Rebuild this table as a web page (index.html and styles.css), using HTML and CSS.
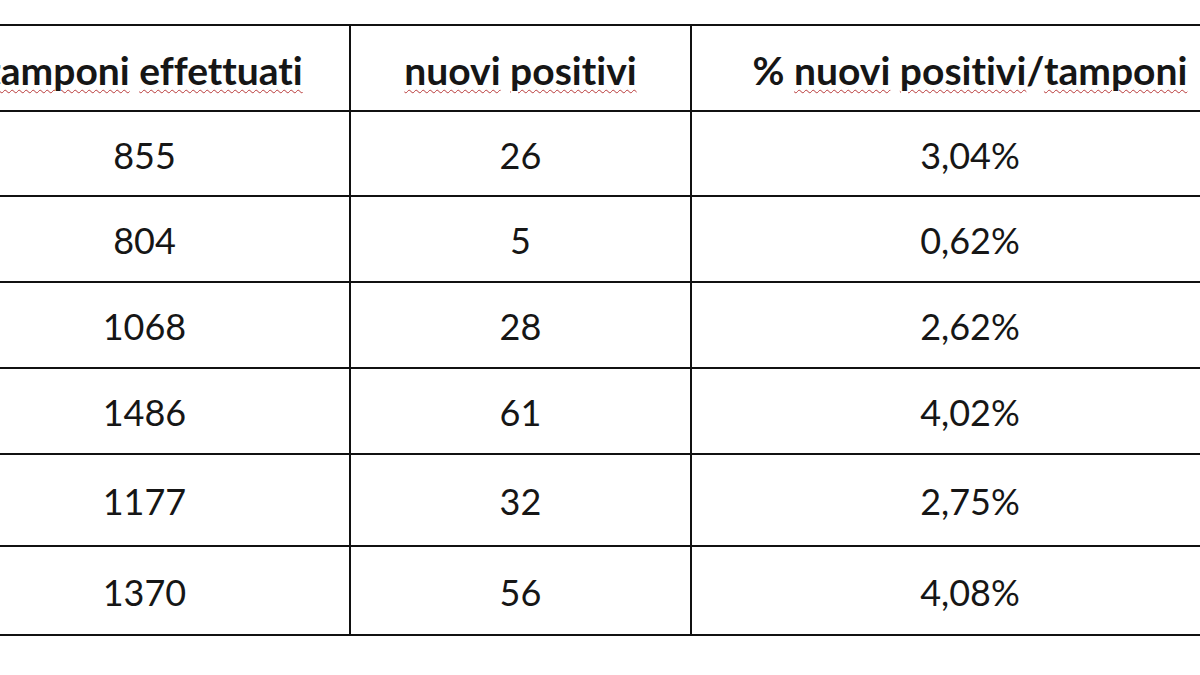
FILE: index.html
```html
<!DOCTYPE html>
<html lang="it">
<head>
<meta charset="utf-8">
<title>Tamponi</title>
<link rel="stylesheet" href="styles.css">
</head>
<body>
<div class="page">
<table class="data">
  <colgroup>
    <col class="c1"><col class="c2"><col class="c3">
  </colgroup>
  <thead>
    <tr class="r0">
      <th><span class="sp">tamponi</span> <span class="sp">effettuati</span></th>
      <th><span class="sp">nuovi</span> <span class="sp">positivi</span></th>
      <th>% <span class="sp">nuovi</span> <span class="sp">positivi</span>/<span class="sp">tamponi</span></th>
    </tr>
  </thead>
  <tbody>
    <tr class="r1"><td>855</td><td>26</td><td>3,04%</td></tr>
    <tr class="r2"><td>804</td><td>5</td><td>0,62%</td></tr>
    <tr class="r3"><td>1068</td><td>28</td><td>2,62%</td></tr>
    <tr class="r4"><td>1486</td><td>61</td><td>4,02%</td></tr>
    <tr class="r5"><td>1177</td><td>32</td><td>2,75%</td></tr>
    <tr class="r6"><td>1370</td><td>56</td><td>4,08%</td></tr>
  </tbody>
</table>
</div>
</body>
</html>
```
FILE: styles.css
```css
html, body {
  margin: 0;
  padding: 0;
  background: #ffffff;
  width: 1200px;
  height: 675px;
  overflow: hidden;
}
.page {
  padding-top: 24px;
  margin-left: -62px;
  width: 1320px;
}
.data {
  border-collapse: collapse;
  table-layout: fixed;
  width: 1310px;
  font-family: Lato, "Liberation Sans", sans-serif;
  font-variant-ligatures: none;
  font-feature-settings: "liga" 0, "clig" 0;
  color: #161616;
}
.c1 { width: 411px; }
.c2 { width: 341px; }
.c3 { width: 558px; }
.data th, .data td {
  border: 2px solid #111111;
  text-align: center;
  vertical-align: middle;
  padding: 0;
  white-space: nowrap;
}
.data th {
  font-size: 39px;
  font-weight: 700;
  padding-top: 4px;
}
.data td {
  font-size: 36px;
  font-weight: 400;
  padding-top: 2px;
}
.sp {
  text-decoration: underline wavy #b83a3a;
  text-decoration-thickness: 1px;
  text-underline-offset: 4px;
}
.r0 { height: 86px; }
.r1 { height: 85px; }
.r2 { height: 86px; }
.r3 { height: 86px; }
.r4 { height: 86px; }
.r5 { height: 92px; }
.r6 { height: 89px; }
```
